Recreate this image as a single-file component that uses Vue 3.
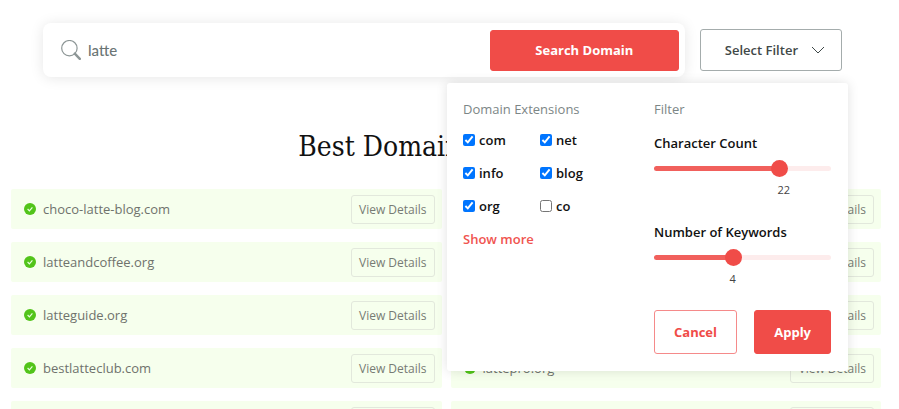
<script setup>
import { ref, computed } from 'vue'

const search = ref('latte')
const filterOpen = ref(true)

const extensions = ref([
  { name: 'com', checked: true },
  { name: 'net', checked: true },
  { name: 'info', checked: true },
  { name: 'blog', checked: true },
  { name: 'org', checked: true },
  { name: 'co', checked: false }
])

const sliders = ref([
  { id: 'characters', label: 'Character Count', value: 22, max: 30 },
  { id: 'keywords', label: 'Number of Keywords', value: 4, max: 9 }
])

const domains = ref([
  'choco-latte-blog.com', 'lattehouse.com',
  'latteandcoffee.org', 'lattetime.net',
  'latteguide.org', 'dailylatte.com',
  'bestlatteclub.com', 'lattepro.org',
  'latteart.info', 'lattelovers.blog'
])

const percents = computed(() => sliders.value.map(s => (s.value / s.max) * 100))

function closeFilter() {
  filterOpen.value = false
}
</script>

<template>
  <main class="page">
    <div class="toolbar">
      <form class="search" @submit.prevent>
        <label class="search-icon" for="search" aria-label="Search">
          <svg width="20" height="20" viewBox="0 0 20 20" fill="none" stroke="#8d9696">
            <circle cx="8.4" cy="8.2" r="7.7" stroke-width="1.2" />
            <path d="M13.8 13.6L18.8 18.8" stroke-width="2.4" stroke-linecap="round" />
          </svg>
        </label>
        <input id="search" v-model="search" class="search-input" type="text" />
        <button class="btn search-btn" type="submit">Search Domain</button>
      </form>
      <button class="select-btn" type="button" @click="filterOpen = !filterOpen">
        Select Filter
        <svg width="14" height="8" viewBox="0 0 14 8" fill="none" stroke="#3f4848">
          <path d="M1 1L7 7L13 1" />
        </svg>
      </button>

      <section v-if="filterOpen" class="panel">
        <div class="column">
          <h2 class="panel-title">Domain Extensions</h2>
          <div class="checks">
            <label v-for="ext in extensions" :key="ext.name" class="check">
              <input v-model="ext.checked" type="checkbox" />
              {{ ext.name }}
            </label>
          </div>
          <a class="more" href="#">Show more</a>
        </div>
        <div class="column">
          <h2 class="panel-title">Filter</h2>
          <div v-for="(slider, index) in sliders" :key="slider.id" class="slider">
            <label :for="slider.id">{{ slider.label }}</label>
            <input
              :id="slider.id"
              v-model.number="slider.value"
              type="range"
              min="0"
              :max="slider.max"
              :style="{ '--fill': percents[index] + '%' }"
            />
            <div class="scale">
              <output :for="slider.id" :style="{ left: percents[index] + '%' }">{{ slider.value }}</output>
            </div>
          </div>
          <div class="actions">
            <button class="btn outline" type="button" @click="closeFilter">Cancel</button>
            <button class="btn" type="button" @click="closeFilter">Apply</button>
          </div>
        </div>
      </section>
    </div>

    <h1 class="title">Best Domains for Latte</h1>

    <ul class="results">
      <li v-for="domain in domains" :key="domain" class="result">
        <svg width="12" height="12" viewBox="0 0 12 12">
          <circle cx="6" cy="6" r="6" fill="#52c41a" />
          <path d="M3.6 6L5.4 7.8L8.4 4.4" fill="none" stroke="#e9ffe0" stroke-width="1.2" />
        </svg>
        <span class="domain">{{ domain }}</span>
        <button class="details" type="button">View Details</button>
      </li>
    </ul>
  </main>
</template>

<style>
body {
  margin: 0;
  background: #fff;
}
</style>

<style scoped>
.page {
  box-sizing: border-box;
  height: 100vh;
  overflow: hidden;
  padding: 23px 18px 0 11px;
  font-family: "Open Sans", "Noto Sans", sans-serif;
  color: #111;
}
button,
input {
  font-family: inherit;
}
button {
  cursor: pointer;
}
.toolbar {
  position: relative;
  display: flex;
  align-items: center;
  gap: 15px;
  margin: 0 39px 0 32px;
}
.search {
  flex: 1;
  display: flex;
  align-items: center;
  box-sizing: border-box;
  height: 54px;
  padding: 0 6px 0 18px;
  border-radius: 8px;
  background: #fff;
  box-shadow: 0 1px 14px rgba(0, 0, 0, 0.1);
}
.search-icon {
  display: flex;
}
.search-input {
  flex: 1;
  min-width: 0;
  padding: 0 7px;
  border: 0;
  outline: 0;
  background: none;
  font-family: Lato, sans-serif;
  font-size: 15px;
  font-weight: 500;
  color: #6b7575;
}
.btn {
  height: 44px;
  padding: 0 19px;
  border: 1px solid #f04c48;
  border-radius: 3px;
  background: #f04c48;
  color: #fff;
  font-size: 13px;
  font-weight: 700;
}
.search-btn {
  width: 189px;
  height: 41px;
}
.outline {
  border-color: #f58a8a;
  background: #fff;
  color: #f04c48;
}
.select-btn {
  display: flex;
  align-items: center;
  justify-content: center;
  gap: 13px;
  height: 42px;
  padding: 0 16px 0 24px;
  border: 1px solid #a4acac;
  border-radius: 3px;
  background: #fff;
  color: #3f4848;
  font-size: 13px;
  font-weight: 600;
}
.panel {
  position: absolute;
  z-index: 2;
  top: 60px;
  right: -6px;
  display: grid;
  grid-template-columns: 1fr 177px;
  box-sizing: border-box;
  width: 401px;
  padding: 17px 17px 17px 16px;
  border-radius: 3px;
  background: #fff;
  box-shadow: 0 0 12px rgba(0, 0, 0, 0.12);
}
.panel-title {
  margin: 0;
  color: #7c8686;
  font-size: 13px;
  font-weight: 400;
  line-height: 18px;
}
.checks {
  display: grid;
  grid-template-columns: 77px 77px;
  row-gap: 13px;
  margin: 12px 0 13px;
}
.check {
  display: flex;
  align-items: center;
  gap: 4px;
  font-size: 13px;
  font-weight: 600;
  line-height: 20px;
}
.check input {
  width: 12px;
  height: 12px;
  margin: 0;
  accent-color: #0075ff;
}
.more {
  display: block;
  color: #f0544f;
  font-size: 13px;
  font-weight: 600;
  line-height: 20px;
  text-decoration: none;
}
.slider {
  display: flex;
  flex-direction: column;
  margin-top: 15px;
  font-size: 13px;
  font-weight: 600;
  line-height: 20px;
}
.slider + .slider {
  margin-top: 24px;
}
.slider input {
  appearance: none;
  width: 100%;
  height: 17px;
  margin: 7px 0 4px;
  background: none;
}
.slider input::-webkit-slider-runnable-track {
  height: 5px;
  border-radius: 3px;
  background: linear-gradient(to right, #f1605c var(--fill), #fdecec var(--fill));
}
.slider input::-webkit-slider-thumb {
  appearance: none;
  width: 17px;
  height: 17px;
  margin-top: -6px;
  border-radius: 50%;
  background: #f04c48;
}
.scale {
  position: relative;
  height: 17px;
}
.scale output {
  position: absolute;
  transform: translateX(-50%);
  color: #444;
  font-size: 11px;
  font-weight: 400;
  line-height: 17px;
}
.actions {
  display: flex;
  justify-content: space-between;
  margin-top: 23px;
}
.title {
  margin: 51px 0 23px;
  font-family: "DejaVu Serif Condensed", "DejaVu Serif", serif;
  font-size: 28px;
  font-weight: 400;
  line-height: 38px;
  text-align: center;
}
.results {
  display: grid;
  grid-template-columns: 1fr 1fr;
  gap: 13px 9px;
  margin: 0;
  padding: 0;
  list-style: none;
}
.result {
  display: flex;
  align-items: center;
  box-sizing: border-box;
  height: 40px;
  padding: 0 7px 0 13px;
  border-radius: 2px;
  background: #f6ffed;
}
.domain {
  flex: 1;
  margin-left: 7px;
  color: #6f726c;
  font-size: 13px;
}
.details {
  height: 29px;
  padding: 0 7px;
  border: 1px solid #e2e8dc;
  border-radius: 3px;
  background: none;
  color: #777b74;
  font-size: 12px;
}
</style>
